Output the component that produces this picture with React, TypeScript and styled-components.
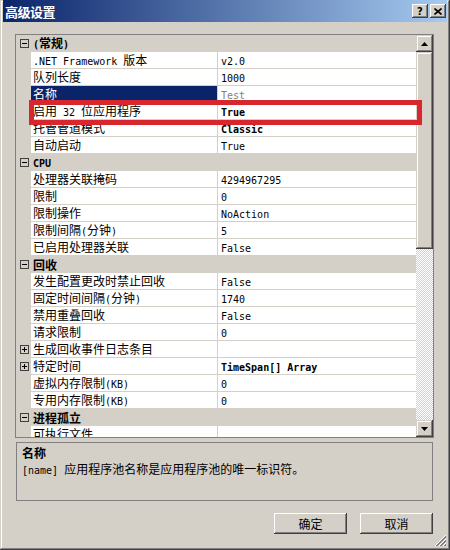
import React from "react";
import styled, { createGlobalStyle } from "styled-components";

const GlobalStyle = createGlobalStyle`
  html, body {
    margin: 0;
    padding: 0;
    background: #d4d0c8;
  }
  body {
    font-family: "Noto Sans CJK SC", sans-serif;
    font-size: 12px;
    color: #000;
  }
`;

const Window = styled.div`
  position: relative;
  width: 450px;
  height: 550px;
  box-sizing: border-box;
  padding: 0 3px 3px 3px;
  background: #d4d0c8;
  display: flex;
  flex-direction: column;
  box-shadow: inset -1px -1px #404040, inset 1px 1px #d4d0c8,
    inset -2px -2px #808080, inset 2px 2px #ffffff;
`;

const TitleBar = styled.div`
  height: 22px;
  display: flex;
  align-items: center;
  padding: 0 1px 0 2px;
  background: linear-gradient(to right, #0a246a, #a6caf0);
`;

const TitleText = styled.span`
  flex: 1;
  color: #fff;
  font-weight: bold;
  font-size: 13px;
  letter-spacing: -0.5px;
`;

const CaptionButton = styled.div`
  width: 16px;
  height: 14px;
  margin-left: 2px;
  box-sizing: border-box;
  background: #d4d0c8;
  display: flex;
  align-items: center;
  justify-content: center;
  font-family: "DejaVu Sans", sans-serif;
  font-weight: bold;
  font-size: 10px;
  box-shadow: inset -1px -1px #404040, inset 1px 1px #fff,
    inset -2px -2px #808080, inset 2px 2px #d4d0c8;
`;

const Body = styled.div`
  flex: 1;
  display: flex;
  flex-direction: column;
  padding: 12px 13px 0 12px;
`;

const Grid = styled.div`
  position: relative;
  height: 404px;
  box-sizing: border-box;
  border: 1px solid #808080;
  display: flex;
  background: #fff;
`;

const List = styled.div`
  flex: 1;
  overflow: hidden;
`;

const CategoryRow = styled.div`
  height: 17px;
  display: flex;
  align-items: center;
  background: #d4d0c8;
  font-weight: bold;
  line-height: 16px;
`;

const CategoryLabel = styled.span`
  margin-left: 4px;
`;

const PropRow = styled.div`
  height: 17px;
  display: grid;
  grid-template-columns: 15px 186px 1fr;
  background: #d4d0c8;
`;

const Margin = styled.div`
  display: flex;
  align-items: center;
  padding-left: 4px;
`;

const NameCell = styled.div<{ $selected?: boolean }>`
  padding-left: 2px;
  line-height: 16px;
  height: 16px;
  white-space: nowrap;
  overflow: hidden;
  background: ${(p) => (p.$selected ? "#0a246a" : "#fff")};
  color: ${(p) => (p.$selected ? "#fff" : "#000")};
  margin-bottom: 1px;
`;

const ValueCell = styled.div<{ $bold?: boolean; $readonly?: boolean }>`
  margin-left: 1px;
  padding-left: 3px;
  line-height: 16px;
  height: 16px;
  white-space: nowrap;
  overflow: hidden;
  background: #fff;
  font-weight: ${(p) => (p.$bold ? "bold" : "normal")};
  color: ${(p) => (p.$readonly ? "#808080" : "#000")};
  margin-bottom: 1px;
`;

const Latin = styled.span`
  font-family: "DejaVu Sans Mono", monospace;
  font-size: 10px;
`;

const Scrollbar = styled.div`
  width: 17px;
  display: flex;
  flex-direction: column;
`;

const ScrollButton = styled.div`
  width: 17px;
  height: 17px;
  box-sizing: border-box;
  background: #d4d0c8;
  display: flex;
  align-items: center;
  justify-content: center;
  box-shadow: inset -1px -1px #404040, inset 1px 1px #d4d0c8,
    inset -2px -2px #808080, inset 2px 2px #fff;
`;

const Thumb = styled.div`
  height: 197px;
  background: #d4d0c8;
  box-shadow: inset -1px -1px #404040, inset 1px 1px #d4d0c8,
    inset -2px -2px #808080, inset 2px 2px #fff;
`;

const Track = styled.div`
  flex: 1;
  background: repeating-conic-gradient(#ffffff 0 25%, #d4d0c8 0 50%) 0 0 / 2px 2px;
`;

const Highlight = styled.div`
  position: absolute;
  left: 13px;
  top: 65px;
  width: 393px;
  height: 25px;
  box-sizing: border-box;
  border: 5px solid #d7262e;
  pointer-events: none;
`;

const Description = styled.div`
  margin: 4px 1px 0 1px;
  height: 59px;
  box-sizing: border-box;
  border: 1px solid #808080;
  padding: 2px 5px;
  line-height: 16px;
`;

const DescTitle = styled.div`
  font-weight: bold;
`;

const ButtonRow = styled.div`
  display: flex;
  justify-content: flex-end;
  gap: 13px;
  margin-top: 12px;
  padding-right: 1px;
`;

const Button = styled.button`
  width: 73px;
  height: 21px;
  border: none;
  padding: 0;
  background: #d4d0c8;
  font-family: "Noto Sans CJK SC", sans-serif;
  font-size: 12px;
  color: #000;
  box-shadow: inset -1px -1px #404040, inset 1px 1px #fff,
    inset -2px -2px #808080, inset 2px 2px #d4d0c8;
`;

const Grip = styled.svg`
  position: absolute;
  right: 3px;
  bottom: 3px;
`;

type Prop = {
  name: string;
  value: string;
  bold?: boolean;
  selected?: boolean;
  readonly?: boolean;
  expandable?: boolean;
};

const sections: { title: string; rows: Prop[] }[] = [
  {
    title: "(常规)",
    rows: [
      { name: ".NET Framework 版本", value: "v2.0" },
      { name: "队列长度", value: "1000" },
      { name: "名称", value: "Test", selected: true, readonly: true },
      { name: "启用 32 位应用程序", value: "True", bold: true },
      { name: "托管管道模式", value: "Classic", bold: true },
      { name: "自动启动", value: "True" },
    ],
  },
  {
    title: "CPU",
    rows: [
      { name: "处理器关联掩码", value: "4294967295" },
      { name: "限制", value: "0" },
      { name: "限制操作", value: "NoAction" },
      { name: "限制间隔(分钟)", value: "5" },
      { name: "已启用处理器关联", value: "False" },
    ],
  },
  {
    title: "回收",
    rows: [
      { name: "发生配置更改时禁止回收", value: "False" },
      { name: "固定时间间隔(分钟)", value: "1740" },
      { name: "禁用重叠回收", value: "False" },
      { name: "请求限制", value: "0" },
      { name: "生成回收事件日志条目", value: "", expandable: true },
      { name: "特定时间", value: "TimeSpan[] Array", bold: true, expandable: true },
      { name: "虚拟内存限制(KB)", value: "0" },
      { name: "专用内存限制(KB)", value: "0" },
    ],
  },
  {
    title: "进程孤立",
    rows: [{ name: "可执行文件", value: "" }],
  },
];

// ascii runs get the narrow mono font, like SimSun's half-width glyphs
const Mixed = ({ text }: { text: string }) => (
  <>
    {text.split(/([\x00-\x7F]+)/).map((part, i) =>
      /^[\x00-\x7F]+$/.test(part) ? (
        <Latin key={i}>{part}</Latin>
      ) : (
        <React.Fragment key={i}>{part}</React.Fragment>
      )
    )}
  </>
);

const ExpandBox = ({ open }: { open: boolean }) => (
  <svg width="9" height="9" viewBox="0 0 9 9">
    <rect x="0.5" y="0.5" width="8" height="8" fill="none" stroke="#404040" />
    <line x1="2" y1="4.5" x2="7" y2="4.5" stroke="#000" />
    {!open && <line x1="4.5" y1="2" x2="4.5" y2="7" stroke="#000" />}
  </svg>
);

const Arrow = ({ up }: { up: boolean }) => (
  <svg width="7" height="4" viewBox="0 0 7 4">
    <path d={up ? "M0 4 L3.5 0 L7 4 Z" : "M0 0 L3.5 4 L7 0 Z"} fill="#000" />
  </svg>
);

export default function App() {
  return (
    <>
      <GlobalStyle />
      <Window>
        <TitleBar>
          <TitleText>高级设置</TitleText>
          <CaptionButton>?</CaptionButton>
          <CaptionButton>
            <svg width="8" height="7" viewBox="0 0 8 7">
              <path d="M0.5 0.5 L7.5 6.5 M7.5 0.5 L0.5 6.5" stroke="#000" strokeWidth="1.6" />
            </svg>
          </CaptionButton>
        </TitleBar>
        <Body>
          <Grid>
            <List>
              {sections.map((s) => (
                <React.Fragment key={s.title}>
                  <CategoryRow>
                    <Margin>
                      <ExpandBox open />
                    </Margin>
                    <CategoryLabel>
                      <Mixed text={s.title} />
                    </CategoryLabel>
                  </CategoryRow>
                  {s.rows.map((r) => (
                    <PropRow key={r.name}>
                      <Margin>{r.expandable && <ExpandBox open={false} />}</Margin>
                      <NameCell $selected={r.selected}>
                        <Mixed text={r.name} />
                      </NameCell>
                      <ValueCell $bold={r.bold} $readonly={r.readonly}>
                        <Mixed text={r.value} />
                      </ValueCell>
                    </PropRow>
                  ))}
                </React.Fragment>
              ))}
            </List>
            <Scrollbar>
              <ScrollButton>
                <Arrow up />
              </ScrollButton>
              <Thumb />
              <Track />
              <ScrollButton>
                <Arrow up={false} />
              </ScrollButton>
            </Scrollbar>
            <Highlight />
          </Grid>
          <Description>
            <DescTitle>名称</DescTitle>
            <div>
              <Mixed text="[name] 应用程序池名称是应用程序池的唯一标识符。" />
            </div>
          </Description>
          <ButtonRow>
            <Button>确定</Button>
            <Button>取消</Button>
          </ButtonRow>
        </Body>
        <Grip width="13" height="13" viewBox="0 0 13 13">
          {[0, 4, 8].map((o) => (
            <g key={o}>
              <line x1={12} y1={o + 1} x2={o + 1} y2={12} stroke="#fff" />
              <line x1={12} y1={o + 2} x2={o + 2} y2={12} stroke="#808080" />
              <line x1={12} y1={o + 3} x2={o + 3} y2={12} stroke="#808080" />
            </g>
          ))}
        </Grip>
      </Window>
    </>
  );
}
